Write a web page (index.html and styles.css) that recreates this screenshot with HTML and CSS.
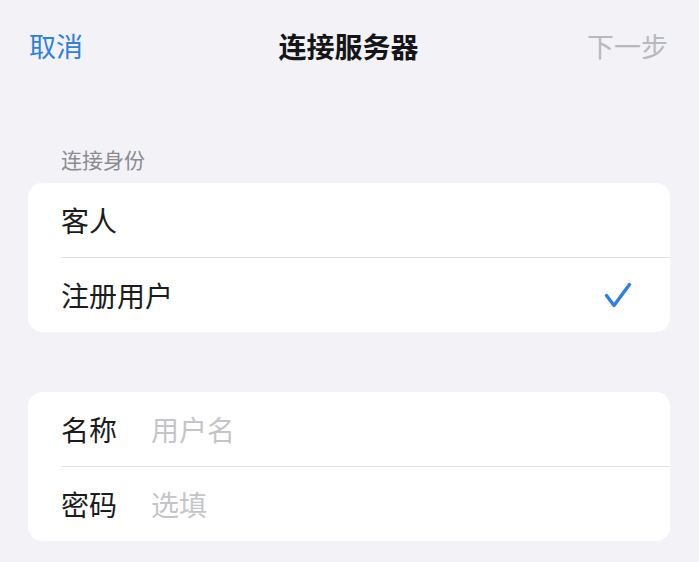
FILE: index.html
```html
<!DOCTYPE html>
<html lang="zh-CN">
<head>
<meta charset="utf-8">
<title>连接服务器</title>
<link rel="stylesheet" href="styles.css">
</head>
<body>
<div class="sheet">
  <header class="nav">
    <span class="nav-btn cancel">取消</span>
    <span class="nav-title">连接服务器</span>
    <span class="nav-btn next">下一步</span>
  </header>

  <div class="section-header">连接身份</div>
  <div class="card">
    <div class="row">
      <span class="row-text">客人</span>
    </div>
    <div class="sep"></div>
    <div class="row">
      <span class="row-text">注册用户</span>
      <svg class="check" width="28" height="26" viewBox="0 0 28 26" aria-hidden="true">
        <path d="M2.5 13.5 L10 23.5 L25.5 2.5" fill="none" stroke="#2f7fe3" stroke-width="3.4" stroke-linecap="round" stroke-linejoin="round"/>
      </svg>
    </div>
  </div>

  <div class="card card-gap">
    <label class="row field">
      <span class="row-text label">名称</span>
      <input class="input" type="text" placeholder="用户名">
    </label>
    <div class="sep"></div>
    <label class="row field">
      <span class="row-text label">密码</span>
      <input class="input" type="password" placeholder="选填">
    </label>
  </div>
</div>
</body>
</html>
```

FILE: styles.css
```css
* { box-sizing: border-box; }

html, body {
  margin: 0;
  padding: 0;
}

body {
  background: #f2f2f7;
  font-family: "Noto Sans CJK SC", "Noto Sans", sans-serif;
  color: #1c1c1e;
  width: 699px;
  height: 562px;
  overflow: hidden;
}

.sheet {
  background: #f2f2f7;
  min-height: 562px;
  padding: 0 29px 0 28px;
}

.nav {
  height: 92px;
  display: grid;
  grid-template-columns: 1fr auto 1fr;
  align-items: center;
  padding: 0 2px 0 1px;
}

.nav-btn {
  font-size: 27px;
  line-height: 32px;
}

.cancel { color: #2f7fe0; justify-self: start; }
.next { color: #b9b9bd; justify-self: end; }

.nav-title {
  font-size: 28px;
  line-height: 32px;
  font-weight: 700;
  color: #151517;
}

.section-header {
  padding: 54px 0 0 33px;
  font-size: 21px;
  line-height: 26px;
  color: #8b8b90;
  margin-bottom: 11px;
}

.card {
  background: #ffffff;
  border-radius: 14px;
  overflow: hidden;
}

.card-gap {
  margin-top: 60px;
}

.row {
  height: 74px;
  display: flex;
  align-items: center;
  padding: 0 38px 0 33px;
}

.row-text {
  font-size: 28px;
  line-height: 34px;
  color: #1c1c1e;
}

.check {
  margin-left: auto;
  display: block;
}

.sep {
  height: 1px;
  margin-left: 33px;
  background: #e3e3e7;
}

.field {
  display: grid;
  grid-template-columns: 90px 1fr;
  align-items: center;
}

.input {
  border: 0;
  outline: none;
  background: transparent;
  padding: 0;
  margin: 0;
  font-family: inherit;
  font-size: 28px;
  line-height: 34px;
  color: #1c1c1e;
  width: 100%;
}

.input::placeholder {
  color: #c5c5c9;
}
```
